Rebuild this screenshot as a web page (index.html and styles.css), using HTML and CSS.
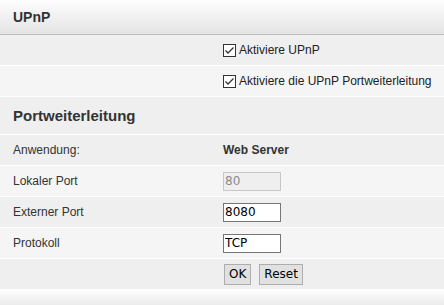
FILE: index.html
```html
<!DOCTYPE html>
<html lang="de">
<head>
    <meta charset="UTF-8">
    <title>UPnP</title>
    <link rel="stylesheet" href="styles.css">
</head>
<body>

<div class="panel">
    <div class="panel-title">UPnP</div>

    <div class="row dark">
        <div class="label"></div>
        <label class="check">
            <svg class="box" width="13" height="13" viewBox="0 0 13 13">
                <rect x="0.5" y="0.5" width="12" height="12" fill="#fff" stroke="#333"/>
                <polyline points="2.5,6.5 5,9 10.5,3.5" fill="none" stroke="#333" stroke-width="1.3"/>
            </svg>
            Aktiviere UPnP
        </label>
    </div>
    <div class="row light">
        <div class="label"></div>
        <label class="check">
            <svg class="box" width="13" height="13" viewBox="0 0 13 13">
                <rect x="0.5" y="0.5" width="12" height="12" fill="#fff" stroke="#333"/>
                <polyline points="2.5,6.5 5,9 10.5,3.5" fill="none" stroke="#333" stroke-width="1.3"/>
            </svg>
            Aktiviere die UPnP Portweiterleitung
        </label>
    </div>

    <div class="section-title">Portweiterleitung</div>

    <div class="row dark">
        <div class="label">Anwendung:</div>
        <div class="value bold">Web Server</div>
    </div>
    <div class="row light">
        <div class="label">Lokaler Port</div>
        <div class="value"><input class="field" type="text" value="80" disabled></div>
    </div>
    <div class="row dark">
        <div class="label">Externer Port</div>
        <div class="value"><input class="field" type="text" value="8080"></div>
    </div>
    <div class="row light">
        <div class="label">Protokoll</div>
        <div class="value"><input class="field" type="text" value="TCP"></div>
    </div>
    <div class="row dark last">
        <div class="label"></div>
        <div class="value buttons">
            <button class="btn">OK</button>
            <button class="btn">Reset</button>
        </div>
    </div>

    <div class="panel-foot"></div>
</div>

</body>
</html>
```

FILE: styles.css
```css
body {
    margin: 0;
    padding: 0;
    background: #fff;
    font-family: 'Liberation Sans', Arial, sans-serif;
    font-size: 12px;
    color: #333;
}

.panel {
    width: 444px;
}

.panel-title {
    height: 34px;
    line-height: 34px;
    padding-left: 13px;
    font-size: 14px;
    font-weight: bold;
    color: #333;
    background: linear-gradient(#fdfdfd, #e4e4e4);
    border-bottom: 1px solid #bdbdbd;
}

.row {
    display: grid;
    grid-template-columns: 223px 1fr;
    align-items: center;
    height: 30px;
    border-bottom: 1px solid #fff;
}

.row.last {
    border-bottom: none;
}

.dark {
    background: #efefef;
}

.light {
    background: #f5f5f5;
}

.label {
    padding-left: 13px;
    color: #333;
}

.bold {
    font-weight: bold;
}

.check {
    display: flex;
    align-items: center;
    gap: 3px;
    color: #222;
}

.section-title {
    height: 37px;
    line-height: 37px;
    padding-left: 13px;
    font-size: 15px;
    font-weight: bold;
    background: #efefef;
    border-bottom: 1px solid #fff;
}

.field {
    box-sizing: border-box;
    width: 58px;
    height: 19px;
    margin: 0;
    padding: 0 1px;
    border: 1px solid #767676;
    background: #fff;
    font-family: 'DejaVu Sans', Verdana, sans-serif;
    font-size: 12px;
    color: #000;
}

.field:disabled {
    background: #efefef;
    border-color: #c8c8c8;
    color: #8a8a8a;
}

.buttons {
    display: flex;
    gap: 8px;
    padding-left: 1px;
}

.btn {
    height: 21px;
    padding: 0 4px;
    border: 1px solid #adadad;
    background: #e1e1e1;
    font-family: 'DejaVu Sans', Verdana, sans-serif;
    font-size: 12px;
    color: #000;
}

.panel-foot {
    height: 16px;
    background: linear-gradient(#fff, #ebebeb);
}
```
